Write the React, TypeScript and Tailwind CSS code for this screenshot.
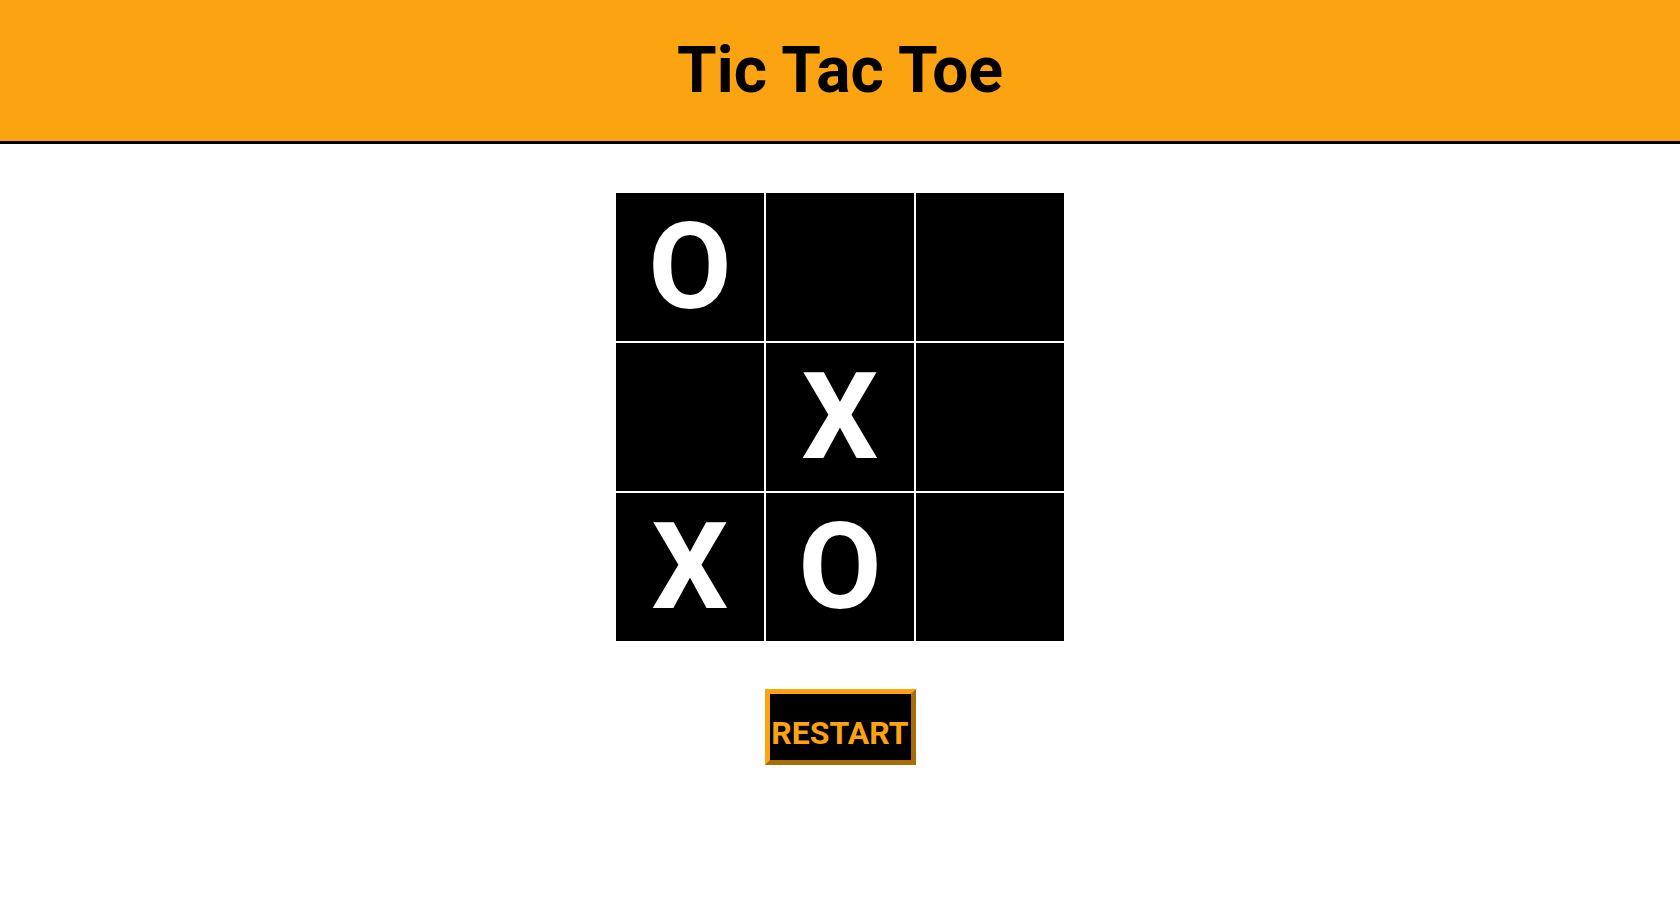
import React from "react";

const board = ["O", "", "", "", "X", "", "X", "O", ""];

export default function App() {
  return (
    <div className="min-h-screen bg-white" style={{ fontFamily: "Roboto, 'Liberation Sans', sans-serif" }}>
      <header className="h-[144px] bg-[#fca311] border-b-[3px] border-black flex items-center justify-center">
        <h1 className="text-[64px] font-bold text-black leading-none">Tic Tac Toe</h1>
      </header>
      <div className="flex flex-col items-center">
        <div className="mt-[49px] grid grid-cols-[148px_148px_148px] grid-rows-[148px_148px_148px] gap-[2px] bg-white">
          {board.map((c, i) => (
            <div key={i} className="bg-black flex items-center justify-center text-white text-[121px] font-bold leading-none">
              {c}
            </div>
          ))}
        </div>
        <button className="mt-[48px] w-[151px] h-[76px] bg-black border-[5px] border-t-[#fca311] border-l-[#fca311] border-b-[#a86d0b] border-r-[#a86d0b] text-[#fca311] text-[32px] font-bold leading-none flex items-center justify-center overflow-visible pt-[12px]">
          RESTART
        </button>
      </div>
    </div>
  );
}
